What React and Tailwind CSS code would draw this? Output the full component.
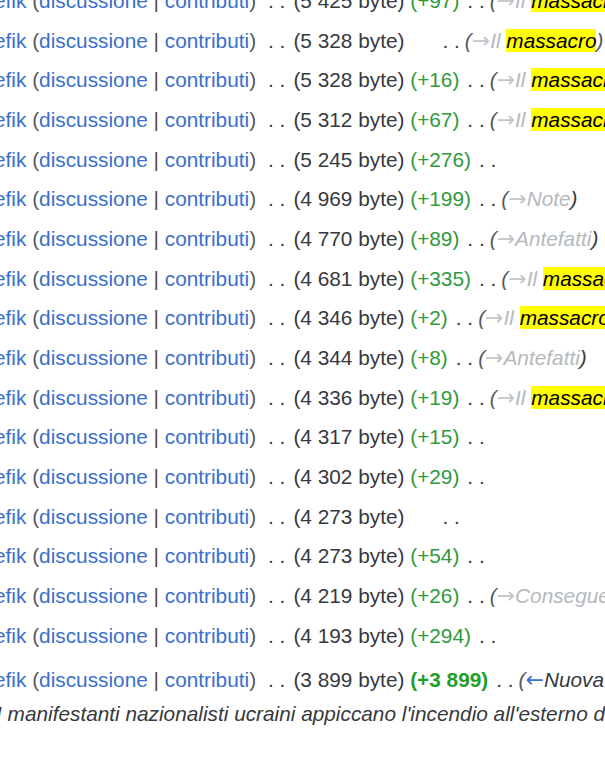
import React from 'react';

// righe della cronologia (dalla più recente)
const ROWS = [
  { size: '5 425', diff: '+97', sum: 'il' },
  { size: '5 328', diff: null, sum: 'il' },
  { size: '5 328', diff: '+16', sum: 'il' },
  { size: '5 312', diff: '+67', sum: 'il' },
  { size: '5 245', diff: '+276', sum: null },
  { size: '4 969', diff: '+199', sum: 'Note' },
  { size: '4 770', diff: '+89', sum: 'Antefatti' },
  { size: '4 681', diff: '+335', sum: 'il' },
  { size: '4 346', diff: '+2', sum: 'il' },
  { size: '4 344', diff: '+8', sum: 'Antefatti' },
  { size: '4 336', diff: '+19', sum: 'il' },
  { size: '4 317', diff: '+15', sum: null },
  { size: '4 302', diff: '+29', sum: null },
  { size: '4 273', diff: null, sum: null },
  { size: '4 273', diff: '+54', sum: null },
  { size: '4 219', diff: '+26', sum: 'Conseguenze' },
  { size: '4 193', diff: '+294', sum: null },
];

const Arrow = ({ ch = '→', className = '' }) => (
  <span className={`not-italic font-['DejaVu_Sans',sans-serif] text-[22px] leading-none ${className}`}>{ch}</span>
);

function User() {
  return (
    <>
      <a className="text-[#3a6fcc]">efik</a>{' '}
      <span className="text-[#54595d]">(</span>
      <a className="text-[#3a6fcc]">discussione</a>
      <span className="text-[#5e4a44]"> | </span>
      <a className="text-[#3a6fcc]">contributi</a>
      <span className="text-[#54595d]">)</span>
      <span className="ml-[12px] mr-[8px] text-[#36393d]">. .</span>
    </>
  );
}

function Summary({ sum }) {
  if (!sum) return null;
  if (sum === 'il') {
    return (
      <span className="italic">
        <span className="text-[#54595d]">(</span>
        <Arrow className="text-[#c2c6ca]" />
        <span className="text-[#b4b9be]">Il</span>{' '}
        <span className="bg-[#ffff00] text-black">massacro</span>
        <span className="text-[#54595d]">)</span>
      </span>
    );
  }
  return (
    <span className="italic">
      <span className="text-[#54595d]">(</span>
      <Arrow className="text-[#c2c6ca]" />
      <span className="text-[#b4b9be]">{sum}</span>
      <span className="text-[#36393d]">)</span>
    </span>
  );
}

function Row({ r }) {
  return (
    <div className="h-[39.67px] leading-[39.67px] whitespace-nowrap -ml-[6px]">
      <User />
      <span className="text-[#36393d]">({r.size} byte)</span>
      {r.diff ? (
        <>
          {' '}
          <span className="text-[#2f9a3a]">({r.diff})</span>
        </>
      ) : (
        <span className="inline-block w-[30px]" />
      )}
      <span className="ml-[8px] mr-[5px] text-[#36393d]">. .</span>
      <Summary sum={r.sum} />
    </div>
  );
}

export default function App() {
  return (
    <div className="w-[605px] h-[757px] overflow-hidden bg-white font-['Liberation_Sans',Arial,sans-serif] text-[20.8px] text-[#36393d]">
      <div className="-mt-[19px]">
        {ROWS.map((r, i) => (
          <Row key={i} r={r} />
        ))}

        {/* prima versione: creazione pagina */}
        <div className="mt-[8px] leading-[34px] whitespace-nowrap -ml-[6px]">
          <div>
            <User />
            <span className="text-[#36393d]">(3 899 byte)</span>{' '}
            <strong className="text-[#1f9e2a]">(+3 899)</strong>
            <span className="ml-[8px] mr-[5px] text-[#36393d]">. .</span>
            <span className="italic">
              <span className="text-[#54595d]">(</span>
              <Arrow ch="←" className="text-[#3a6fcc]" />
              <span className="text-[#36393d]">Nuova pagina:</span>
            </span>
          </div>
          <div className="italic text-[#36393d] ml-[2px]">
            I manifestanti nazionalisti ucraini appiccano l'incendio all'esterno del palazzo
          </div>
        </div>
      </div>
    </div>
  );
}
